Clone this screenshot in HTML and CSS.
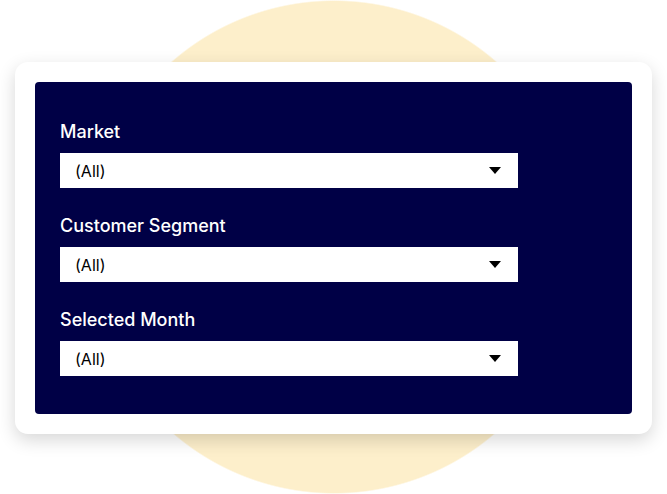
FILE: index.html
```html
<!DOCTYPE html>
<html lang="en">
<head>
  <meta charset="UTF-8">
  <meta name="viewport" content="width=device-width, initial-scale=1.0">
  <title>Filters</title>
<link rel="stylesheet" href="styles.css">
</head>
<body>
  <div class="stage">
    <div class="card">
      <div class="panel">
        <div class="field">
          <div class="label">Market</div>
          <div class="select">
            <span>(All)</span>
            <svg class="caret" width="12" height="8" viewBox="0 0 12 8"><path d="M0 0H12L6 7Z" fill="#000"/></svg>
          </div>
        </div>
        <div class="field">
          <div class="label">Customer Segment</div>
          <div class="select">
            <span>(All)</span>
            <svg class="caret" width="12" height="8" viewBox="0 0 12 8"><path d="M0 0H12L6 7Z" fill="#000"/></svg>
          </div>
        </div>
        <div class="field">
          <div class="label">Selected Month</div>
          <div class="select">
            <span>(All)</span>
            <svg class="caret" width="12" height="8" viewBox="0 0 12 8"><path d="M0 0H12L6 7Z" fill="#000"/></svg>
          </div>
        </div>
      </div>
    </div>
  </div>
</body>
</html>
```

FILE: styles.css
```css
html,body{margin:0;padding:0;background:#fff;}
body{font-family:Inter,"Noto Sans",sans-serif;}
.stage{width:667px;height:494px;box-sizing:border-box;padding:62px 0 0 15px;
  background:radial-gradient(circle 247px at 334px 247px,#fdefcb 99.4%,rgba(253,239,203,0) 100%);}
.card{width:637px;box-sizing:border-box;padding:20px;background:#fff;border-radius:13px;
  box-shadow:0 6px 18px rgba(0,0,0,.16);}
.panel{background:#000046;border-radius:4px;padding:39px 0 38px 25px;display:flex;flex-direction:column;gap:27px;}
.field{display:flex;flex-direction:column;gap:10px;}
.label{color:#fff;font-size:18px;line-height:22px;font-weight:500;}
.select{width:458px;height:35px;box-sizing:border-box;background:#fff;display:flex;align-items:center;justify-content:space-between;padding:0 17px 0 15px;}
.select span{font-size:16px;color:#000;}
.caret{display:block;margin-top:1px;}
```
